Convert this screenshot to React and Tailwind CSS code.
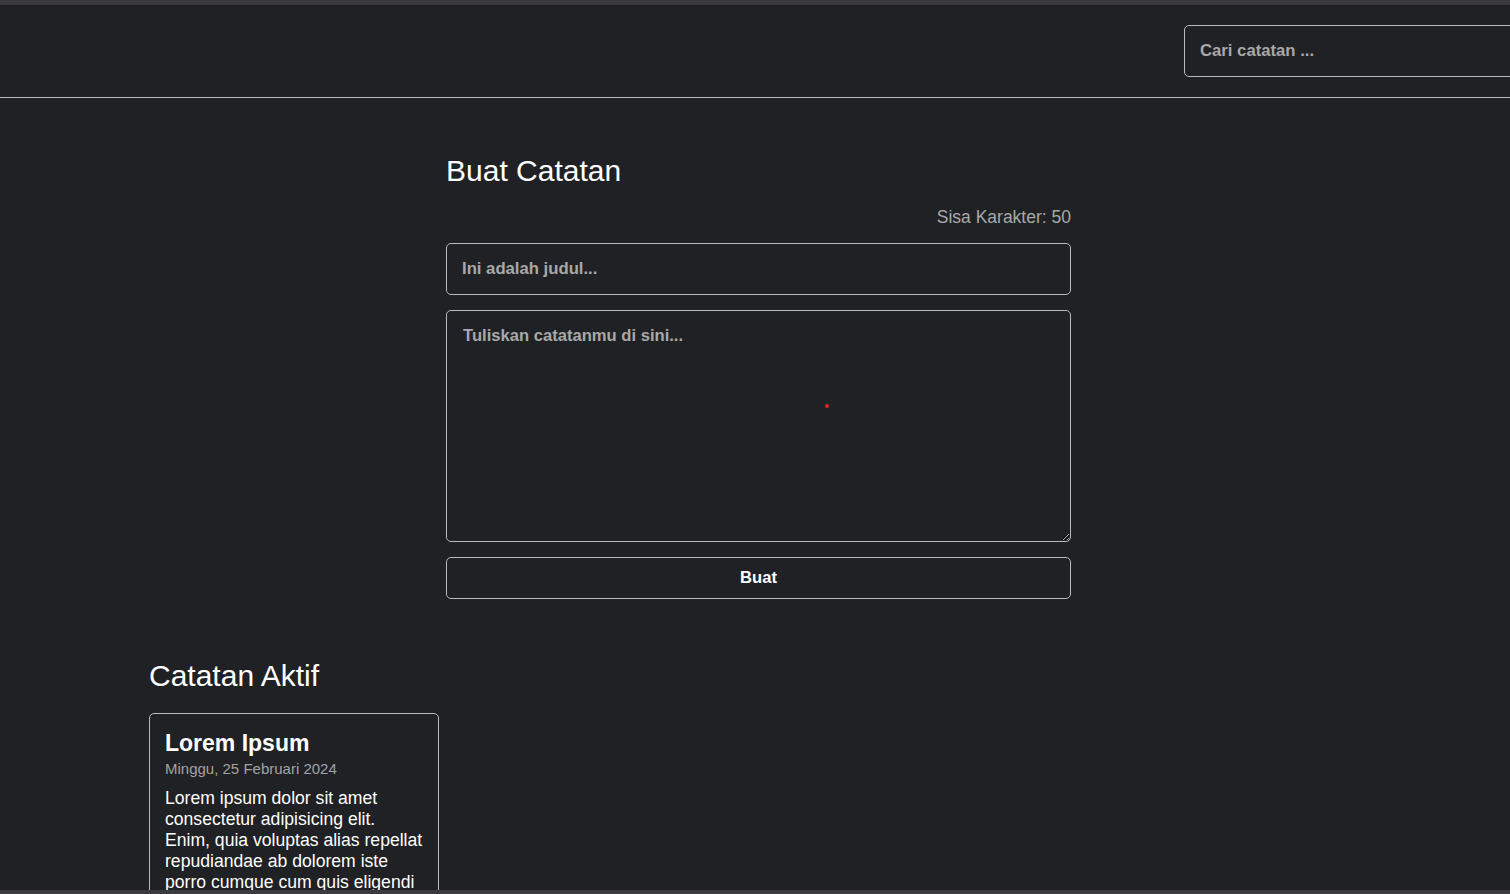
import React, { useState } from 'react';

const notes = [
    {
        id: 1,
        title: 'Lorem Ipsum',
        date: 'Minggu, 25 Februari 2024',
        body: 'Lorem ipsum dolor sit amet consectetur adipisicing elit. Enim, quia voluptas alias repellat repudiandae ab dolorem iste porro cumque cum quis eligendi officiis, quam, nostrum dicta ipsam.',
    },
];

const App = () => {
    const [title, setTitle] = useState('');
    const [body, setBody] = useState('');
    const [search, setSearch] = useState('');

    return (
        <div className="h-[894px] flex flex-col overflow-hidden bg-[#202124] text-white font-['Liberation_Sans',Arial,sans-serif]">
            <div className="h-[5px] shrink-0 bg-[#3b3b3d]"></div>

            <div className="flex-1 overflow-hidden">
                {/* Header */}
                <header className="flex justify-end py-5 border-b border-[#b9b9b9]">
                    <input
                        type="text"
                        value={search}
                        onChange={(e) => setSearch(e.target.value)}
                        placeholder="Cari catatan ..."
                        className="w-[400px] -mr-[74px] h-[52px] px-[15px] bg-transparent border border-[#b9b9b9] rounded-[5px] text-[16.7px] font-bold text-white placeholder:text-[#a8a8a8] outline-none"
                    />
                </header>

                {/* Form */}
                <section className="w-[625px] ml-[446px] pt-[56px]">
                    <h2 className="text-[30px] leading-[34px] mb-[19px]">Buat Catatan</h2>
                    <p className="text-right text-[17.5px] leading-[21px] text-[#a8a8a8] mb-[15px]">
                        Sisa Karakter: {50 - title.length}
                    </p>
                    <div className="flex flex-col gap-[15px]">
                        <input
                            type="text"
                            value={title}
                            maxLength={50}
                            onChange={(e) => setTitle(e.target.value)}
                            placeholder="Ini adalah judul..."
                            className="h-[52px] px-[15px] bg-transparent border border-[#b9b9b9] rounded-[5px] text-[16.7px] font-bold text-white placeholder:text-[#a8a8a8] outline-none"
                        />
                        <div className="relative">
                            <textarea
                                value={body}
                                onChange={(e) => setBody(e.target.value)}
                                placeholder="Tuliskan catatanmu di sini..."
                                className="block w-full h-[232px] pt-[13px] pb-[15px] pl-[16px] pr-[15px] bg-transparent border border-[#b9b9b9] rounded-[5px] text-[16.6px] font-bold text-white placeholder:text-[#a8a8a8] outline-none"
                            ></textarea>
                            {/* cursor spot */}
                            <span className="absolute left-[379px] top-[94px] w-[4px] h-[4px] rounded-full bg-[#e5252a]"></span>
                        </div>
                        <button className="h-[42px] bg-transparent border border-[#b9b9b9] rounded-[5px] text-[16.6px] font-bold text-white">
                            Buat
                        </button>
                    </div>
                </section>

                {/* Notes list */}
                <section className="ml-[149px] pt-[60px]">
                    <h2 className="text-[30px] leading-[34px] mb-[20px]">Catatan Aktif</h2>
                    <div className="flex flex-wrap gap-4">
                        {notes.map((note) => (
                            <article key={note.id} className="w-[290px] border border-[#b9b9b9] rounded-[5px] px-[15px] pt-[16px] pb-4">
                                <h3 className="text-[23px] leading-[26px] font-bold">{note.title}</h3>
                                <p className="text-[15px] leading-[18px] text-[#a3a3a3] mt-[4px]">{note.date}</p>
                                <p className="text-[17.6px] leading-[21px] mt-[10px]">{note.body}</p>
                            </article>
                        ))}
                    </div>
                </section>
            </div>

            <div className="h-[4px] shrink-0 bg-[#3b3b3d]"></div>
        </div>
    );
};

export default App;
